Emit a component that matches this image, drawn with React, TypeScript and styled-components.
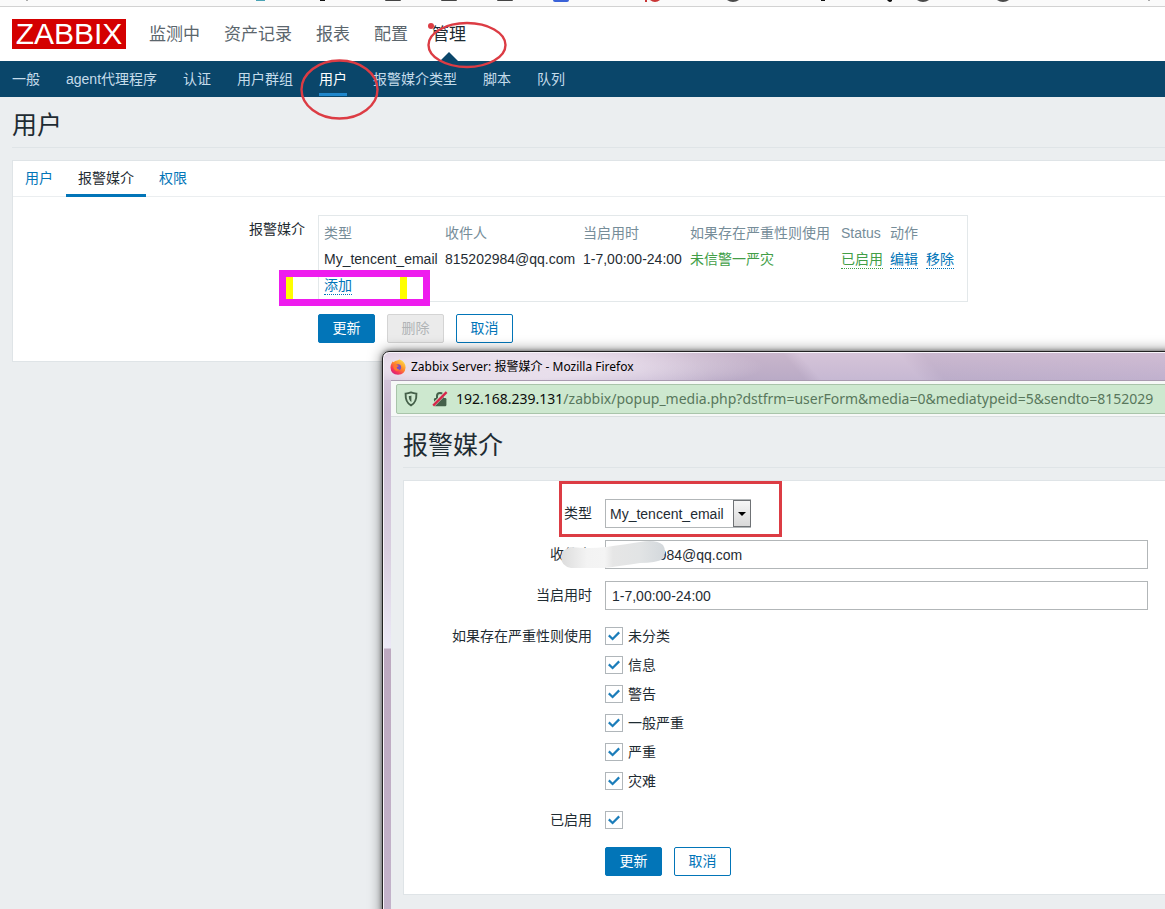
import React from "react";
import styled, { createGlobalStyle, css } from "styled-components";

const GlobalStyle = createGlobalStyle`
  *, *::before, *::after { box-sizing: border-box; }
  body {
    margin: 0;
    background: #ebeef0;
    color: #1f2c33;
    font: 14px/20px "Liberation Sans", "Noto Sans CJK SC", sans-serif;
  }
  button, input, select { font: inherit; color: inherit; }
  h1, ul { margin: 0; padding: 0; }
  ul { list-style: none; }
  a { text-decoration: none; }
`;

const Page = styled.div`
  position: relative;
  min-height: 100vh;
  overflow: hidden;
`;

/* ---------- browser strip and navigation ---------- */

const BookmarkStrip = styled.div`
  height: 7px;
  overflow: hidden;
  background: #fafafa;
  border-bottom: 1px solid #d2d2d2;
  svg { display: block; }
`;

const Header = styled.header`
  display: flex;
  align-items: center;
  gap: 23px;
  height: 54px;
  padding: 0 12px;
  background: #fff;
`;

const Logo = styled.a`
  width: 114px;
  height: 30px;
  background: #d40000;
  color: #fff;
  font-size: 30px;
  line-height: 30px;
  text-align: center;
`;

const MainMenu = styled.ul`
  display: flex;
  gap: 24px;
  height: 100%;
`;

const MainLink = styled.a<{ $active?: boolean }>`
  position: relative;
  display: block;
  height: 100%;
  color: ${(p) => (p.$active ? "#1f2c33" : "#5b666d")};
  font-size: 17px;
  line-height: 55px;
  ${(p) =>
    p.$active &&
    css`
      &::after {
        content: "";
        position: absolute;
        left: 50%;
        bottom: 0;
        margin-left: -9px;
        border: 9px solid transparent;
        border-top: 0;
        border-bottom-color: #0a466a;
      }
    `}
`;

const SubMenu = styled.ul`
  display: flex;
  gap: 26px;
  height: 36px;
  padding: 0 12px;
  background: #0a466a;
`;

const SubLink = styled.a<{ $active?: boolean }>`
  display: block;
  height: 35px;
  color: ${(p) => (p.$active ? "#fff" : "#c5dcea")};
  line-height: 36px;
  border-bottom: 3px solid ${(p) => (p.$active ? "#1f87cc" : "transparent")};
`;

/* ---------- shared content parts ---------- */

const Content = styled.main`
  padding-left: 12px;
`;

const PageTitle = styled.h1`
  height: 51px;
  margin-bottom: 12px;
  padding-top: 6px;
  border-bottom: 1px solid #dfe4e7;
  font-size: 25px;
  font-weight: 400;
  line-height: 44px;
`;

const Card = styled.section`
  background: #fff;
  border: 1px solid #dfe4e7;
  border-width: 1px 0 1px 1px;
`;

const Tabs = styled.div`
  display: flex;
  gap: 1px;
  height: 36px;
  border-bottom: 1px solid #ebeef0;
`;

const Tab = styled.a<{ $active?: boolean }>`
  height: 36px;
  padding: 0 12px;
  color: ${(p) => (p.$active ? "#1f2c33" : "#0275b8")};
  line-height: 35px;
  border-bottom: 3px solid ${(p) => (p.$active ? "#0275b8" : "transparent")};
`;

const Form = styled.form<{ $label: number; $right?: number }>`
  display: grid;
  grid-template-columns: ${(p) => p.$label}px 1fr;
  column-gap: 13px;
  row-gap: 12px;
  padding: 18px ${(p) => p.$right ?? 0}px 18px 0;
`;

const labelStyle = css`
  line-height: 29px;
  text-align: right;
`;
const Label = styled.label`
  ${labelStyle}
`;
const LabelText = styled.span`
  ${labelStyle}
`;

const Buttons = styled.div`
  grid-column: 2;
  display: flex;
  gap: 12px;
`;

const Button = styled.button<{ $kind?: "primary" | "outline" }>`
  width: 57px;
  height: 29px;
  padding: 0;
  line-height: 27px;
  border: 1px solid #0275b8;
  border-radius: 2px;
  background: ${(p) => (p.$kind === "primary" ? "#0275b8" : "#fff")};
  color: ${(p) => (p.$kind === "primary" ? "#fff" : "#0275b8")};
  &:disabled {
    background: #ebebeb;
    border-color: #d4d4d4;
    color: #b0b4b6;
  }
`;

/* ---------- media table ---------- */

const TableBox = styled.div`
  justify-self: start;
  padding: 4px 5px 3px;
  border: 1px solid #e3e8ea;
`;

const MediaTable = styled.table`
  table-layout: fixed;
  width: 638px;
  border-collapse: collapse;
  th, td {
    height: 26px;
    padding: 0;
    font-weight: 400;
    text-align: left;
    white-space: nowrap;
    vertical-align: middle;
  }
  th { color: #768d99; }
`;

const Severity = styled.span`
  color: #429e47;
`;

const Action = styled.button<{ $green?: boolean }>`
  display: inline-block;
  margin-right: 8px;
  padding: 0;
  background: none;
  border: 0;
  border-bottom: 1px dotted currentColor;
  color: ${(p) => (p.$green ? "#429e47" : "#0275b8")};
  line-height: 17px;
`;

/* ---------- popup window ---------- */

const Popup = styled.section`
  position: absolute;
  top: 351px;
  left: 382px;
  right: -24px;
  bottom: -12px;
  display: flex;
  flex-direction: column;
  padding: 0 8px;
  border: 1px solid #222;
  border-radius: 7px 7px 0 0;
  background: linear-gradient(
    #dccfe0 0,
    #c9b8d2 60px,
    #d9cfe0 200px,
    #ece9f6 296px,
    #bda9c0 297px,
    #c3b3cb 100%
  );
  box-shadow: inset 1px 1px 0 #f8f4fa, 0 0 4px rgba(0, 0, 0, 0.5), 0 0 14px rgba(0, 0, 0, 0.5);
`;

const TitleBar = styled.header`
  display: flex;
  align-items: center;
  gap: 5px;
  height: 27px;
  margin: 1px -7px 0;
  padding-left: 6px;
  border-radius: 6px 6px 0 0;
  background:
    radial-gradient(ellipse 270px 30px at 110px 14px, rgba(240, 232, 242, 0.8) 40%, transparent),
    linear-gradient(rgba(220, 200, 222, 0.5), rgba(190, 178, 212, 0.5)),
    linear-gradient(50deg, #c9b7cb 32%, #b5a3b8 40%, #b5a3b8 51%, #cfbfd2 53%, #cfbfd2 65%, #b9a8bf 68%, #c5b1c9 100%);
  color: #000;
  font: 12px/18px "Noto Sans", "Noto Sans CJK SC", sans-serif;
`;

const PopupContent = styled.div`
  flex: 1;
  border: 1px solid #a99bb0;
  border-width: 1px 0 0;
  background: #ebeef0;
`;

const Toolbar = styled.div`
  height: 36px;
  padding: 3px 5px;
  background: #f6f8f7;
  border-bottom: 1px solid #d9dedf;
`;

const AddressBar = styled.div`
  display: flex;
  align-items: center;
  height: 30px;
  padding-left: 7px;
  overflow: hidden;
  border: 1px solid #a9c4aa;
  border-radius: 2px;
  background: #cde8cf;
  color: #58775c;
  font: 14px/28px "Noto Sans", sans-serif;
  white-space: nowrap;
  svg { flex: none; }
`;

const AddressIcons = styled.span`
  display: flex;
  gap: 14px;
  margin-right: 8px;
`;

const Host = styled.span`
  color: #0c0d0c;
`;

const PopupBody = styled.div`
  padding: 0 12px;
`;

const TextInput = styled.input`
  width: 100%;
  height: 29px;
  padding: 0 6px;
  border: 1px solid #b2b6b8;
  border-radius: 0;
  background: #fff;
  outline: 0;
`;

const SelectBox = styled.div`
  position: relative;
  justify-self: start;
  width: 146px;
  height: 29px;
`;

const Select = styled.select`
  width: 100%;
  height: 100%;
  padding: 0 20px 0 4px;
  appearance: none;
  border: 1px solid #b2b6b8;
  border-radius: 0;
  background: #fff;
`;

const SelectArrow = styled.span`
  position: absolute;
  top: 1px;
  right: 0;
  bottom: 1px;
  display: grid;
  place-items: center;
  width: 18px;
  border: 1px solid #6f7275;
  background: linear-gradient(#f6f6f6, #d9d9d9);
  pointer-events: none;
  &::after {
    content: "";
    border: 4px solid transparent;
    border-top-color: #000;
    border-bottom: 0;
  }
`;

const CheckList = styled.div`
  margin: -1px 0;
`;

const CheckRow = styled.label<{ $height: number }>`
  display: flex;
  align-items: center;
  gap: 5px;
  height: ${(p) => p.$height}px;
`;

const Tick = styled.span`
  position: relative;
  width: 18px;
  height: 18px;
  input {
    display: block;
    width: 18px;
    height: 18px;
    margin: 0;
    appearance: none;
    border: 1px solid #b0b6ba;
    background: #fff;
  }
  svg {
    position: absolute;
    inset: 0;
    display: none;
    pointer-events: none;
  }
  input:checked + svg { display: block; }
`;

const Annotations = styled.svg`
  position: absolute;
  inset: 0;
  width: 100%;
  height: 100%;
  pointer-events: none;
`;

/* ---------- small pieces ---------- */

function CheckBox({ id, text, height }: { id: string; text?: string; height: number }) {
  return (
    <CheckRow $height={height} htmlFor={id}>
      <Tick>
        <input id={id} type="checkbox" defaultChecked />
        <svg width="18" height="18" viewBox="0 0 18 18" fill="none" stroke="#1b7dba" strokeWidth="2.2">
          <path d="M3.8 8.4 L7.6 12 L14.2 5.4" />
        </svg>
      </Tick>
      {text}
    </CheckRow>
  );
}

const FirefoxIcon = () => (
  <svg width="16" height="16" viewBox="0 0 16 16" aria-hidden="true">
    <defs>
      <linearGradient id="fox" x1="0.85" y1="0.05" x2="0.2" y2="0.95">
        <stop offset="0" stopColor="#ffe14a" />
        <stop offset="0.45" stopColor="#ff8a2b" />
        <stop offset="0.8" stopColor="#f5345a" />
        <stop offset="1" stopColor="#d4207c" />
      </linearGradient>
    </defs>
    <path
      d="M1.6 4.2 L2.6 2.4 L3.6 3.3 Q5 1.8 7 1.5 L9.6 0.4 Q15.6 2.6 15.6 8.6 Q15 15.6 8 15.8 Q0.8 15.2 0.5 8.4 Q0.5 6 1.6 4.2Z"
      fill="url(#fox)"
    />
    <circle cx="8.2" cy="8.2" r="2.9" fill="#7a4fc0" />
    <path d="M3.4 6.2 Q5.4 5 7.4 6.2 L9 6.9 Q7.2 7.6 6.6 8.6 Q6.8 10.6 9.4 10.4 Q7 12.8 4.6 10.8 Q3 8.6 3.4 6.2Z" fill="#ff7a2f" />
  </svg>
);

const ShieldIcon = () => (
  <svg width="14" height="16" viewBox="0 0 14 16" fill="none" aria-hidden="true">
    <path
      d="M7 1.4 C9 2.2 10.8 2.5 12.4 2.6 C12.6 8.4 11.4 12.2 7 14.4 C2.6 12.2 1.4 8.4 1.6 2.6 C3.2 2.5 5 2.2 7 1.4Z"
      stroke="#45604a"
      strokeWidth="1.9"
    />
    <path d="M7.4 4.4 V11 C5.4 9.8 4.8 7.8 4.8 5 Q6.2 4.9 7.4 4.4Z" fill="#45604a" />
  </svg>
);

const InsecureIcon = () => (
  <svg width="16" height="16" viewBox="0 0 16 16" fill="none" aria-hidden="true">
    <path d="M5 7.5 V5 A3 3 0 0 1 11 5 V7.5" stroke="#45604a" strokeWidth="2" />
    <rect x="2" y="7" width="12.4" height="8.2" rx="1.2" fill="#45604a" />
    <path d="M1.2 14.2 L14.2 1.2" stroke="#cde8cf" strokeWidth="3.6" />
    <path d="M1.2 14.6 L14.6 1.2" stroke="#d7264a" strokeWidth="2.4" />
  </svg>
);

const Bookmarks = () => (
  <svg width="1165" height="6" viewBox="0 0 1165 6" aria-hidden="true">
    <path d="M26 0 h2 v1 h-2z M1148 0 h2 v1 h-2z" fill="#aaa" />
    <path d="M256 0 h9 v1 h-9z" fill="#4aa3b5" />
    <path d="M320 0 h5 v1 h-5z M821 0 h4 v1 h-4z M887 0 h5 v1 q-2 2 -4 0z" fill="#111" />
    <path
      d="M385 0 h16 q0 1 -1 1 h-14 q-1 0 -1 -1z M441 0 h16 q0 1 -1 1 h-14 q-1 0 -1 -1z M497 0 h16 q0 1 -1 1 h-14 q-1 0 -1 -1z"
      fill="#444"
    />
    <path d="M553 0 h16 q0 2 -2 2 h-12 q-2 0 -2 -2z" fill="#3a62d8" />
    <path d="M645 0 h2 v2 h-2z M650 0 h10 q-5 4 -10 0z" fill="#c93434" />
    <path d="M727 0 h12 q-6 4 -12 0z M917 0 h12 q-6 4 -12 0z M997 0 h12 q-6 4 -12 0z" fill="#4a4a4a" />
  </svg>
);

const mainMenu = ["监测中", "资产记录", "报表", "配置", "管理"];
const subMenu = ["一般", "agent代理程序", "认证", "用户群组", "用户", "报警媒介类型", "脚本", "队列"];
const tabs = ["用户", "报警媒介", "权限"];
const columns: [string, number][] = [
  ["类型", 121],
  ["收件人", 138],
  ["当启用时", 107],
  ["如果存在严重性则使用", 151],
  ["Status", 49],
  ["动作", 72],
];
const severities = ["未分类", "信息", "警告", "一般严重", "严重", "灾难"];

export default function App() {
  return (
    <>
      <GlobalStyle />
      <Page>
        <BookmarkStrip>
          <Bookmarks />
        </BookmarkStrip>
        <Header>
          <Logo href="#">ZABBIX</Logo>
          <MainMenu>
            {mainMenu.map((item) => (
              <li key={item}>
                <MainLink href="#" $active={item === "管理"}>
                  {item}
                </MainLink>
              </li>
            ))}
          </MainMenu>
        </Header>
        <SubMenu>
          {subMenu.map((item) => (
            <li key={item}>
              <SubLink href="#" $active={item === "用户"}>
                {item}
              </SubLink>
            </li>
          ))}
        </SubMenu>

        <Content>
          <PageTitle>用户</PageTitle>
          <Card>
            <Tabs>
              {tabs.map((item) => (
                <Tab key={item} href="#" $active={item === "报警媒介"}>
                  {item}
                </Tab>
              ))}
            </Tabs>
            <Form $label={292} onSubmit={(e) => e.preventDefault()}>
              <LabelText>报警媒介</LabelText>
              <TableBox>
                <MediaTable>
                  <colgroup>
                    {columns.map(([name, width]) => (
                      <col key={name} width={width} />
                    ))}
                  </colgroup>
                  <thead>
                    <tr>
                      {columns.map(([name]) => (
                        <th key={name}>{name}</th>
                      ))}
                    </tr>
                  </thead>
                  <tbody>
                    <tr>
                      <td>My_tencent_email</td>
                      <td>815202984@qq.com</td>
                      <td>1-7,00:00-24:00</td>
                      <td>
                        <Severity>未信警一严灾</Severity>
                      </td>
                      <td>
                        <Action type="button" $green>
                          已启用
                        </Action>
                      </td>
                      <td>
                        <Action type="button">编辑</Action>
                        <Action type="button">移除</Action>
                      </td>
                    </tr>
                    <tr>
                      <td colSpan={6}>
                        <Action type="button">添加</Action>
                      </td>
                    </tr>
                  </tbody>
                </MediaTable>
              </TableBox>
              <Buttons>
                <Button $kind="primary">更新</Button>
                <Button type="button" disabled>
                  删除
                </Button>
                <Button type="button" $kind="outline">
                  取消
                </Button>
              </Buttons>
            </Form>
          </Card>
        </Content>

        <Popup>
          <TitleBar>
            <FirefoxIcon />
            Zabbix Server: 报警媒介 - Mozilla Firefox
          </TitleBar>
          <PopupContent>
            <Toolbar>
              <AddressBar>
                <AddressIcons>
                  <ShieldIcon />
                  <InsecureIcon />
                </AddressIcons>
                <Host>192.168.239.131</Host>
                /zabbix/popup_media.php?dstfrm=userForm&amp;media=0&amp;mediatypeid=5&amp;sendto=8152029
              </AddressBar>
            </Toolbar>
            <PopupBody>
              <PageTitle>报警媒介</PageTitle>
              <Card>
                <Form $label={188} $right={20} onSubmit={(e) => e.preventDefault()}>
                  <Label htmlFor="type">类型</Label>
                  <SelectBox>
                    <Select id="type">
                      <option>My_tencent_email</option>
                    </Select>
                    <SelectArrow />
                  </SelectBox>
                  <Label htmlFor="sendto">收件人</Label>
                  <TextInput id="sendto" defaultValue="815202984@qq.com" />
                  <Label htmlFor="period">当启用时</Label>
                  <TextInput id="period" defaultValue="1-7,00:00-24:00" />
                  <LabelText>如果存在严重性则使用</LabelText>
                  <CheckList>
                    {severities.map((name, i) => (
                      <CheckBox key={name} id={`severity-${i}`} text={name} height={29} />
                    ))}
                  </CheckList>
                  <Label htmlFor="enabled">已启用</Label>
                  <CheckBox id="enabled" height={27} />
                  <Buttons>
                    <Button $kind="primary">更新</Button>
                    <Button type="button" $kind="outline">
                      取消
                    </Button>
                  </Buttons>
                </Form>
              </Card>
            </PopupBody>
          </PopupContent>
        </Popup>

        <Annotations aria-hidden="true">
          <defs>
            <linearGradient id="smudge">
              <stop offset="0" stopColor="#dcdcdc" />
              <stop offset="0.25" stopColor="#f3f3f3" />
              <stop offset="0.42" stopColor="#f4f4f4" />
              <stop offset="0.5" stopColor="#e6e6e6" />
              <stop offset="0.75" stopColor="#e2e4e5" />
              <stop offset="1" stopColor="#d3d8dc" />
            </linearGradient>
          </defs>
          <g fill="none" stroke="#dc3c44" strokeWidth="2.4">
            <ellipse cx="339.5" cy="89.5" rx="38" ry="29" />
            <ellipse cx="467" cy="45" rx="38.5" ry="22" />
            <rect x="560.5" y="482.5" width="220" height="53" strokeWidth="3" />
          </g>
          <circle cx="431" cy="26" r="3" fill="#dc3c44" />
          <rect x="286" y="277" width="7" height="22" fill="#ffff00" />
          <rect x="400" y="277" width="7" height="22" fill="#ffff00" />
          <rect x="282.5" y="273.5" width="144" height="29" fill="none" stroke="#ee1cee" strokeWidth="7" />
          <path
            d="M571 547 Q590 549 606 547 Q628 544 640 542 Q656 539 663 545 Q667 551 663 559 Q656 563 640 563 Q620 566 604 568 L571 568 Q561 566 561 557 Q562 549 571 547Z"
            fill="url(#smudge)"
          />
        </Annotations>
      </Page>
    </>
  );
}
